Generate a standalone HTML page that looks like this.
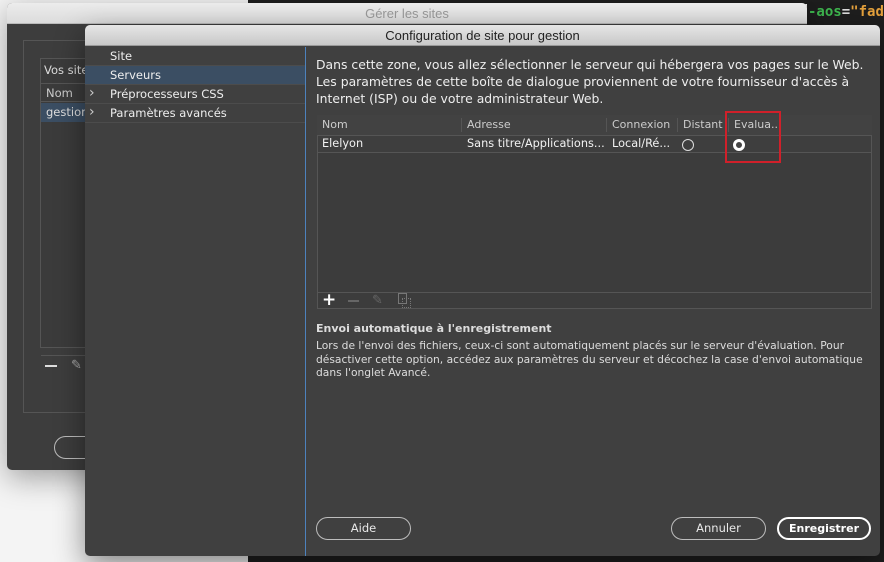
<!DOCTYPE html>
<html><head><meta charset="utf-8"><style>
*{margin:0;padding:0;box-sizing:border-box}
body{width:884px;height:562px;overflow:hidden;background:#f4f4f4;position:relative;font-family:"DejaVu Sans","Liberation Sans",sans-serif;font-size:11.5px;color:#e6e6e6}
.abs{position:absolute;white-space:nowrap}
.code{background:#1e1e1e}
.back{left:7px;top:3px;width:800px;height:467px;background:#3d3d3d;border-radius:5px;box-shadow:0 8px 30px rgba(0,0,0,.35);overflow:hidden}
.back .tb{height:21px;background:linear-gradient(#ececec,#dcdcdc);color:#9a9a9a;text-align:center;font-size:13px;line-height:21px;border-bottom:1px solid #bbb;font-family:"Liberation Sans",sans-serif}
.front{left:85px;top:25px;width:795px;height:531px;background:#404040;border-radius:5px;box-shadow:0 10px 30px rgba(0,0,0,.45);overflow:hidden}
.front .tb{height:21px;background:linear-gradient(#e6e6e6,#c8c8c8);color:#222;text-align:center;font-size:13px;line-height:21px;border-bottom:1px solid #999;font-family:"Liberation Sans",sans-serif}
.side div{height:19px;line-height:18px;padding-left:25px;border-bottom:1px solid #4c4c4c;font-size:11.5px;color:#eee;position:relative}
.side .sel{background:#3b4e63}
.side .ar:before{content:"›";position:absolute;left:4px;top:-1px;font-size:14px;color:#ccc}
.btn{border:1.5px solid #bdbdbd;border-radius:12px;height:23px;text-align:center;line-height:20px;color:#e8e8e8;font-size:11.5px}
</style></head><body>
<div class="abs code" style="left:248px;top:0;width:636px;height:4px"></div>
<div class="abs code" style="left:807px;top:0;width:77px;height:560px"></div>
<div class="abs" style="left:808px;top:4px;font-family:'DejaVu Sans Mono',monospace;font-size:14px;font-weight:bold;color:#3fb950">-aos<span style="color:#ddd">=</span><span style="color:#e6a23c">"fad</span></div>
<div class="abs code" style="left:248px;top:556px;width:636px;height:6px"></div>

<div class="abs back">
 <div class="tb">Gérer les sites</div>
 <div class="abs" style="left:16px;top:37px;width:200px;height:373px;border:1px solid #555"></div>
 <div class="abs" style="left:33px;top:55px;width:200px;height:290px;border:1px solid #555;background:#3b3b3b"></div>
 <div class="abs" style="left:37px;top:60px;color:#ddd">Vos site</div>
 <div class="abs" style="left:34px;top:80px;width:200px;height:19px;border-top:1px solid #555;border-bottom:1px solid #555;color:#ccc;padding:2px 5px">Nom</div>
 <div class="abs" style="left:34px;top:100px;width:200px;height:19px;background:#3b4e63;padding:2px 5px;color:#ddd">gestion</div>
 <div class="abs" style="left:34px;top:352px;width:200px;height:1px;background:#555"></div>
 <div class="abs" style="left:38px;top:362px;width:12px;height:2px;background:#ddd"></div>
 <div class="abs" style="left:64px;top:355px;color:#aaa;font-size:13px">✎</div>
 <div class="abs btn" style="left:47px;top:433px;width:60px"></div>
</div>

<div class="abs front">
 <div class="tb">Configuration de site pour gestion</div>
 <div class="abs side" style="left:0;top:22px;width:220px">
  <div>Site</div>
  <div class="sel">Serveurs</div>
  <div class="ar">Préprocesseurs CSS</div>
  <div class="ar">Paramètres avancés</div>
 </div>
 <div class="abs" style="left:220px;top:22px;width:1px;height:509px;background:#4d82bd"></div>
 <div class="abs" style="left:231px;top:31px;font-size:12.4px;line-height:17px;color:#eee">Dans cette zone, vous allez sélectionner le serveur qui hébergera vos pages sur le Web.<br>Les paramètres de cette boîte de dialogue proviennent de votre fournisseur d'accès à<br>Internet (ISP) ou de votre administrateur Web.</div>
 <div class="abs" style="left:232px;top:90px;width:555px;height:194px;border:1px solid #555;background:#3c3c3c"></div>
 <div class="abs" style="left:232px;top:90px;width:555px;height:20px;background:#424242;color:#ccc;font-size:11px">
  <span class="abs" style="left:5px;top:3px">Nom</span>
  <span class="abs" style="left:150px;top:3px">Adresse</span>
  <span class="abs" style="left:295px;top:3px">Connexion</span>
  <span class="abs" style="left:366px;top:3px">Distant</span>
  <span class="abs" style="left:417px;top:3px">Evalua...</span>
  <span class="abs" style="left:144px;top:3px;width:1px;height:14px;background:#555"></span>
  <span class="abs" style="left:289px;top:3px;width:1px;height:14px;background:#555"></span>
  <span class="abs" style="left:360px;top:3px;width:1px;height:14px;background:#555"></span>
  <span class="abs" style="left:411px;top:3px;width:1px;height:14px;background:#555"></span>
 </div>
 <div class="abs" style="left:233px;top:110px;width:553px;height:18px;background:#3e3e3e;border-top:1px solid #555;border-bottom:1px solid #555;color:#f2f2f2;font-size:11.3px">
  <span class="abs" style="left:4px;top:1px">Elelyon</span>
  <span class="abs" style="left:149px;top:1px">Sans titre/Applications...</span>
  <span class="abs" style="left:294px;top:1px">Local/Ré...</span>
  <span class="abs" style="left:364px;top:3px;width:12px;height:12px;border:1px solid #ddd;border-radius:50%"></span>
  <span class="abs" style="left:415px;top:3px;width:12px;height:12px;border:3px solid #fff;border-radius:50%;background:#444"></span>
 </div>
 <div class="abs" style="left:640px;top:86px;width:56px;height:52px;border:2px solid #d0202a"></div>
 <div class="abs" style="left:233px;top:267px;width:553px;height:1px;background:#555"></div>
 <div class="abs" style="left:237px;top:265px;font-size:17px;font-weight:bold;color:#fff">+</div>
 <div class="abs" style="left:263px;top:275px;width:11px;height:2px;background:#666"></div>
 <div class="abs" style="left:287px;top:268px;color:#666;font-size:13px">✎</div>
 <div class="abs" style="left:313px;top:268px;width:9px;height:11px;border:1px solid #777"></div>
 <div class="abs" style="left:317px;top:273px;width:9px;height:10px;border:1px dotted #777"></div>
 <div class="abs" style="left:231px;top:297px;font-weight:bold;color:#ddd;font-size:11px">Envoi automatique à l'enregistrement</div>
 <div class="abs" style="left:231px;top:314px;font-size:10.7px;line-height:13.5px;color:#ddd">Lors de l'envoi des fichiers, ceux-ci sont automatiquement placés sur le serveur d'évaluation. Pour<br>désactiver cette option, accédez aux paramètres du serveur et décochez la case d'envoi automatique<br>dans l'onglet Avancé.</div>
 <div class="abs btn" style="left:231px;top:492px;width:95px">Aide</div>
 <div class="abs btn" style="left:586px;top:492px;width:95px">Annuler</div>
 <div class="abs btn" style="left:692px;top:492px;width:94px;border:2px solid #fff;color:#fff;font-weight:bold;font-size:11px">Enregistrer</div>
</div>
</body></html>
